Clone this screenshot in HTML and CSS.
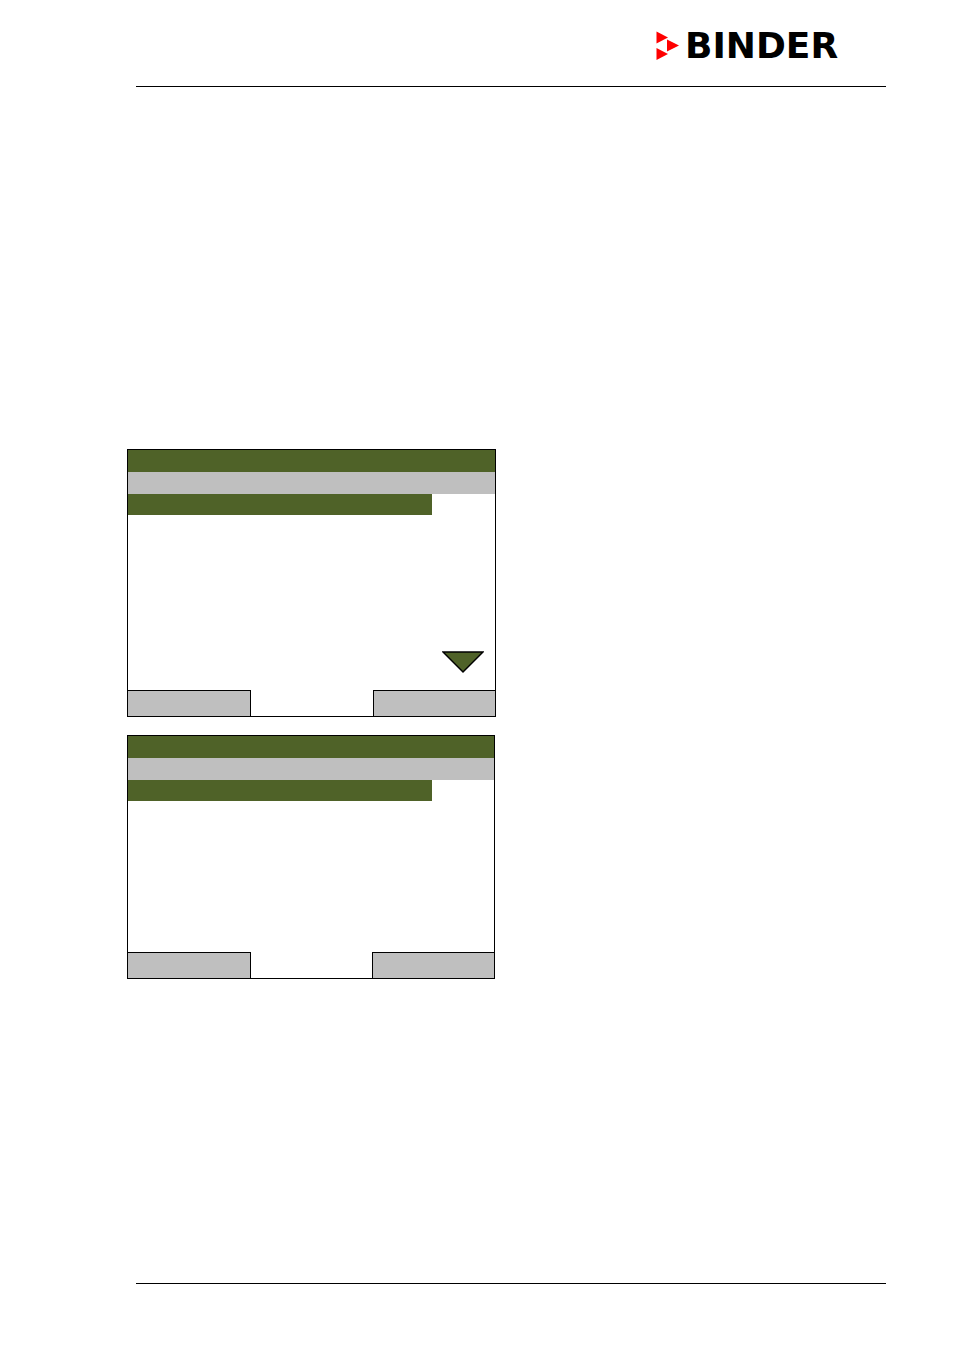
FILE: index.html
```html
<!DOCTYPE html>
<html lang="en">

<head>
  <meta charset="UTF-8" />
  <meta name="viewport" content="width=device-width, initial-scale=1.0" />
  <title>BINDER</title>
  <link rel="stylesheet" href="styles.css">
</head>

<body>
  <header class="header">
    <div class="logo">
      <svg class="logo-mark" viewBox="0 0 23 30" aria-hidden="true">
        <path d="M0.5 0.5 L12 6.5 L0.5 12.5 Z" />
        <path d="M11 8.5 L23 14.5 L11 20.5 Z" />
        <path d="M0.5 17 L12 23 L0.5 29 Z" />
      </svg>
      <span class="logo-name">BINDER</span>
    </div>
  </header>

  <main class="content">
    <!-- Menu with more entries below -->
    <section class="screen screen-tall">
      <div class="title-bar"></div>
      <div class="sub-bar"></div>
      <div class="menu">
        <div class="selected"></div>
        <svg class="scroll-down" viewBox="0 0 42 23" aria-hidden="true">
          <path d="M1 1 H41 L21 21 Z" />
        </svg>
      </div>
      <div class="softkeys">
        <button type="button" class="softkey softkey-left" aria-label="Left key"></button>
        <button type="button" class="softkey softkey-right" aria-label="Right key"></button>
      </div>
    </section>

    <!-- Short menu -->
    <section class="screen">
      <div class="title-bar"></div>
      <div class="sub-bar"></div>
      <div class="menu">
        <div class="selected"></div>
      </div>
      <div class="softkeys">
        <button type="button" class="softkey softkey-left" aria-label="Left key"></button>
        <button type="button" class="softkey softkey-right" aria-label="Right key"></button>
      </div>
    </section>
  </main>

  <footer class="footer"></footer>
</body>

</html>
```
FILE: styles.css
```css
* {
  box-sizing: border-box;
}

body {
  margin: 0;
  min-height: 100vh;
  padding: 24px 69px 66px 127px;
  display: flex;
  flex-direction: column;
  background-color: white;
  color: black;
  font-family: "DejaVu Sans", Verdana, sans-serif;
}

.header {
  margin-left: 9px;
  height: 63px;
  display: flex;
  justify-content: flex-end;
  align-items: flex-start;
  border-bottom: 1px solid black;
}

.logo {
  width: 230px;
  height: 44px;
  display: flex;
  align-items: center;
  gap: 6px;
}

.logo-mark {
  width: 23px;
  height: 30px;
  fill: #ff0000;
}

.logo-name {
  font-size: 36px;
  line-height: 44px;
  font-weight: bold;
}

.content {
  padding-top: 362px;
  display: flex;
  flex-direction: column;
  gap: 18px;
}

.screen {
  width: 100%;
  max-width: 368px;
  min-height: 244px;
  display: flex;
  flex-direction: column;
  border: 1px solid black;
}

.screen-tall {
  max-width: 369px;
  min-height: 268px;
}

.title-bar {
  height: 22px;
  background-color: #4f6228;
}

.sub-bar {
  height: 22px;
  background-color: #bfbfbf;
}

.menu {
  flex: 1;
  display: flex;
  flex-direction: column;
}

.selected {
  width: 100%;
  max-width: 304px;
  height: 21px;
  background-color: #4f6228;
}

.scroll-down {
  width: 42px;
  height: 23px;
  margin: auto 11px 16px auto;
  fill: #4f6228;
  stroke: black;
  stroke-width: 1.5;
}

.softkeys {
  display: flex;
  justify-content: space-between;
}

.softkey {
  width: 123px;
  height: 26px;
  padding: 0;
  border: 0 solid black;
  border-top-width: 1px;
  background-color: #bfbfbf;
  cursor: pointer;
}

.softkey-left {
  border-right-width: 1px;
}

.softkey-right {
  width: 122px;
  border-left-width: 1px;
}

.footer {
  margin-top: auto;
  margin-left: 9px;
  border-top: 1px solid black;
}
```
